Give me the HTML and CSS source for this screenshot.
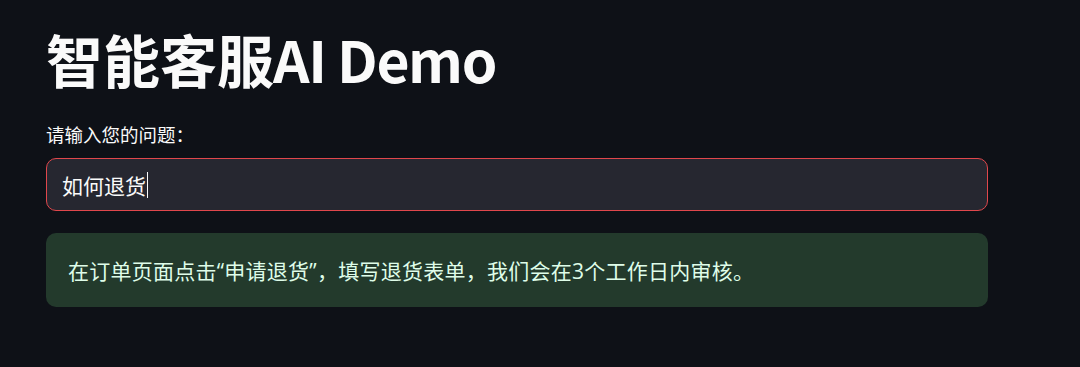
FILE: index.html
```html
<!DOCTYPE html>
<html lang="zh-CN">
<head>
<meta charset="utf-8">
<title>智能客服AI Demo</title>
<link rel="stylesheet" href="styles.css">
</head>
<body>
<main class="app">
  <h1 class="title">智能客服<span class="title-latin">AI Demo</span></h1>
  <label class="field-label">请输入您的问题：</label>
  <div class="text-input" role="textbox">如何退货<span class="caret"></span></div>
  <div class="alert-success">在订单页面点击“申请退货”，填写退货表单，我们会在3个工作日内审核。</div>
</main>
</body>
</html>
```
FILE: styles.css
```css
html, body {
  margin: 0;
  padding: 0;
  background: #0e1117;
}
body {
  font-family: "Noto Sans CJK SC", "Noto Sans", sans-serif;
  color: #fafafa;
}
.app {
  width: 942px;
  padding: 24px 0 0 46px;
  display: flex;
  flex-direction: column;
}
.title {
  margin: 0;
  font-size: 57px;
  font-weight: 700;
  line-height: 1.2;
  color: #fafafa;
}
.title-latin {
  letter-spacing: -1.4px;
  margin-left: -1px;
}
.field-label {
  margin-top: 29px;
  font-size: 18.5px;
  line-height: 27px;
  color: #fafafa;
}
.text-input {
  margin-top: 10px;
  box-sizing: border-box;
  height: 53px;
  border: 1.3px solid #e0474c;
  border-radius: 10px;
  background: #262730;
  padding: 0 15px;
  display: flex;
  align-items: center;
  font-size: 21px;
  color: #fafafa;
}
.caret {
  display: inline-block;
  width: 1.3px;
  height: 26px;
  background: #fafafa;
  margin-left: 1px;
}
.alert-success {
  margin-top: 22px;
  box-sizing: border-box;
  height: 74px;
  border-radius: 10px;
  background: #233a2c;
  padding: 0 22px;
  display: flex;
  align-items: center;
  font-family: "Open Sans", "Noto Sans CJK SC", sans-serif;
  font-size: 21px;
  letter-spacing: 0.25px;
  color: #dffde9;
}
```
